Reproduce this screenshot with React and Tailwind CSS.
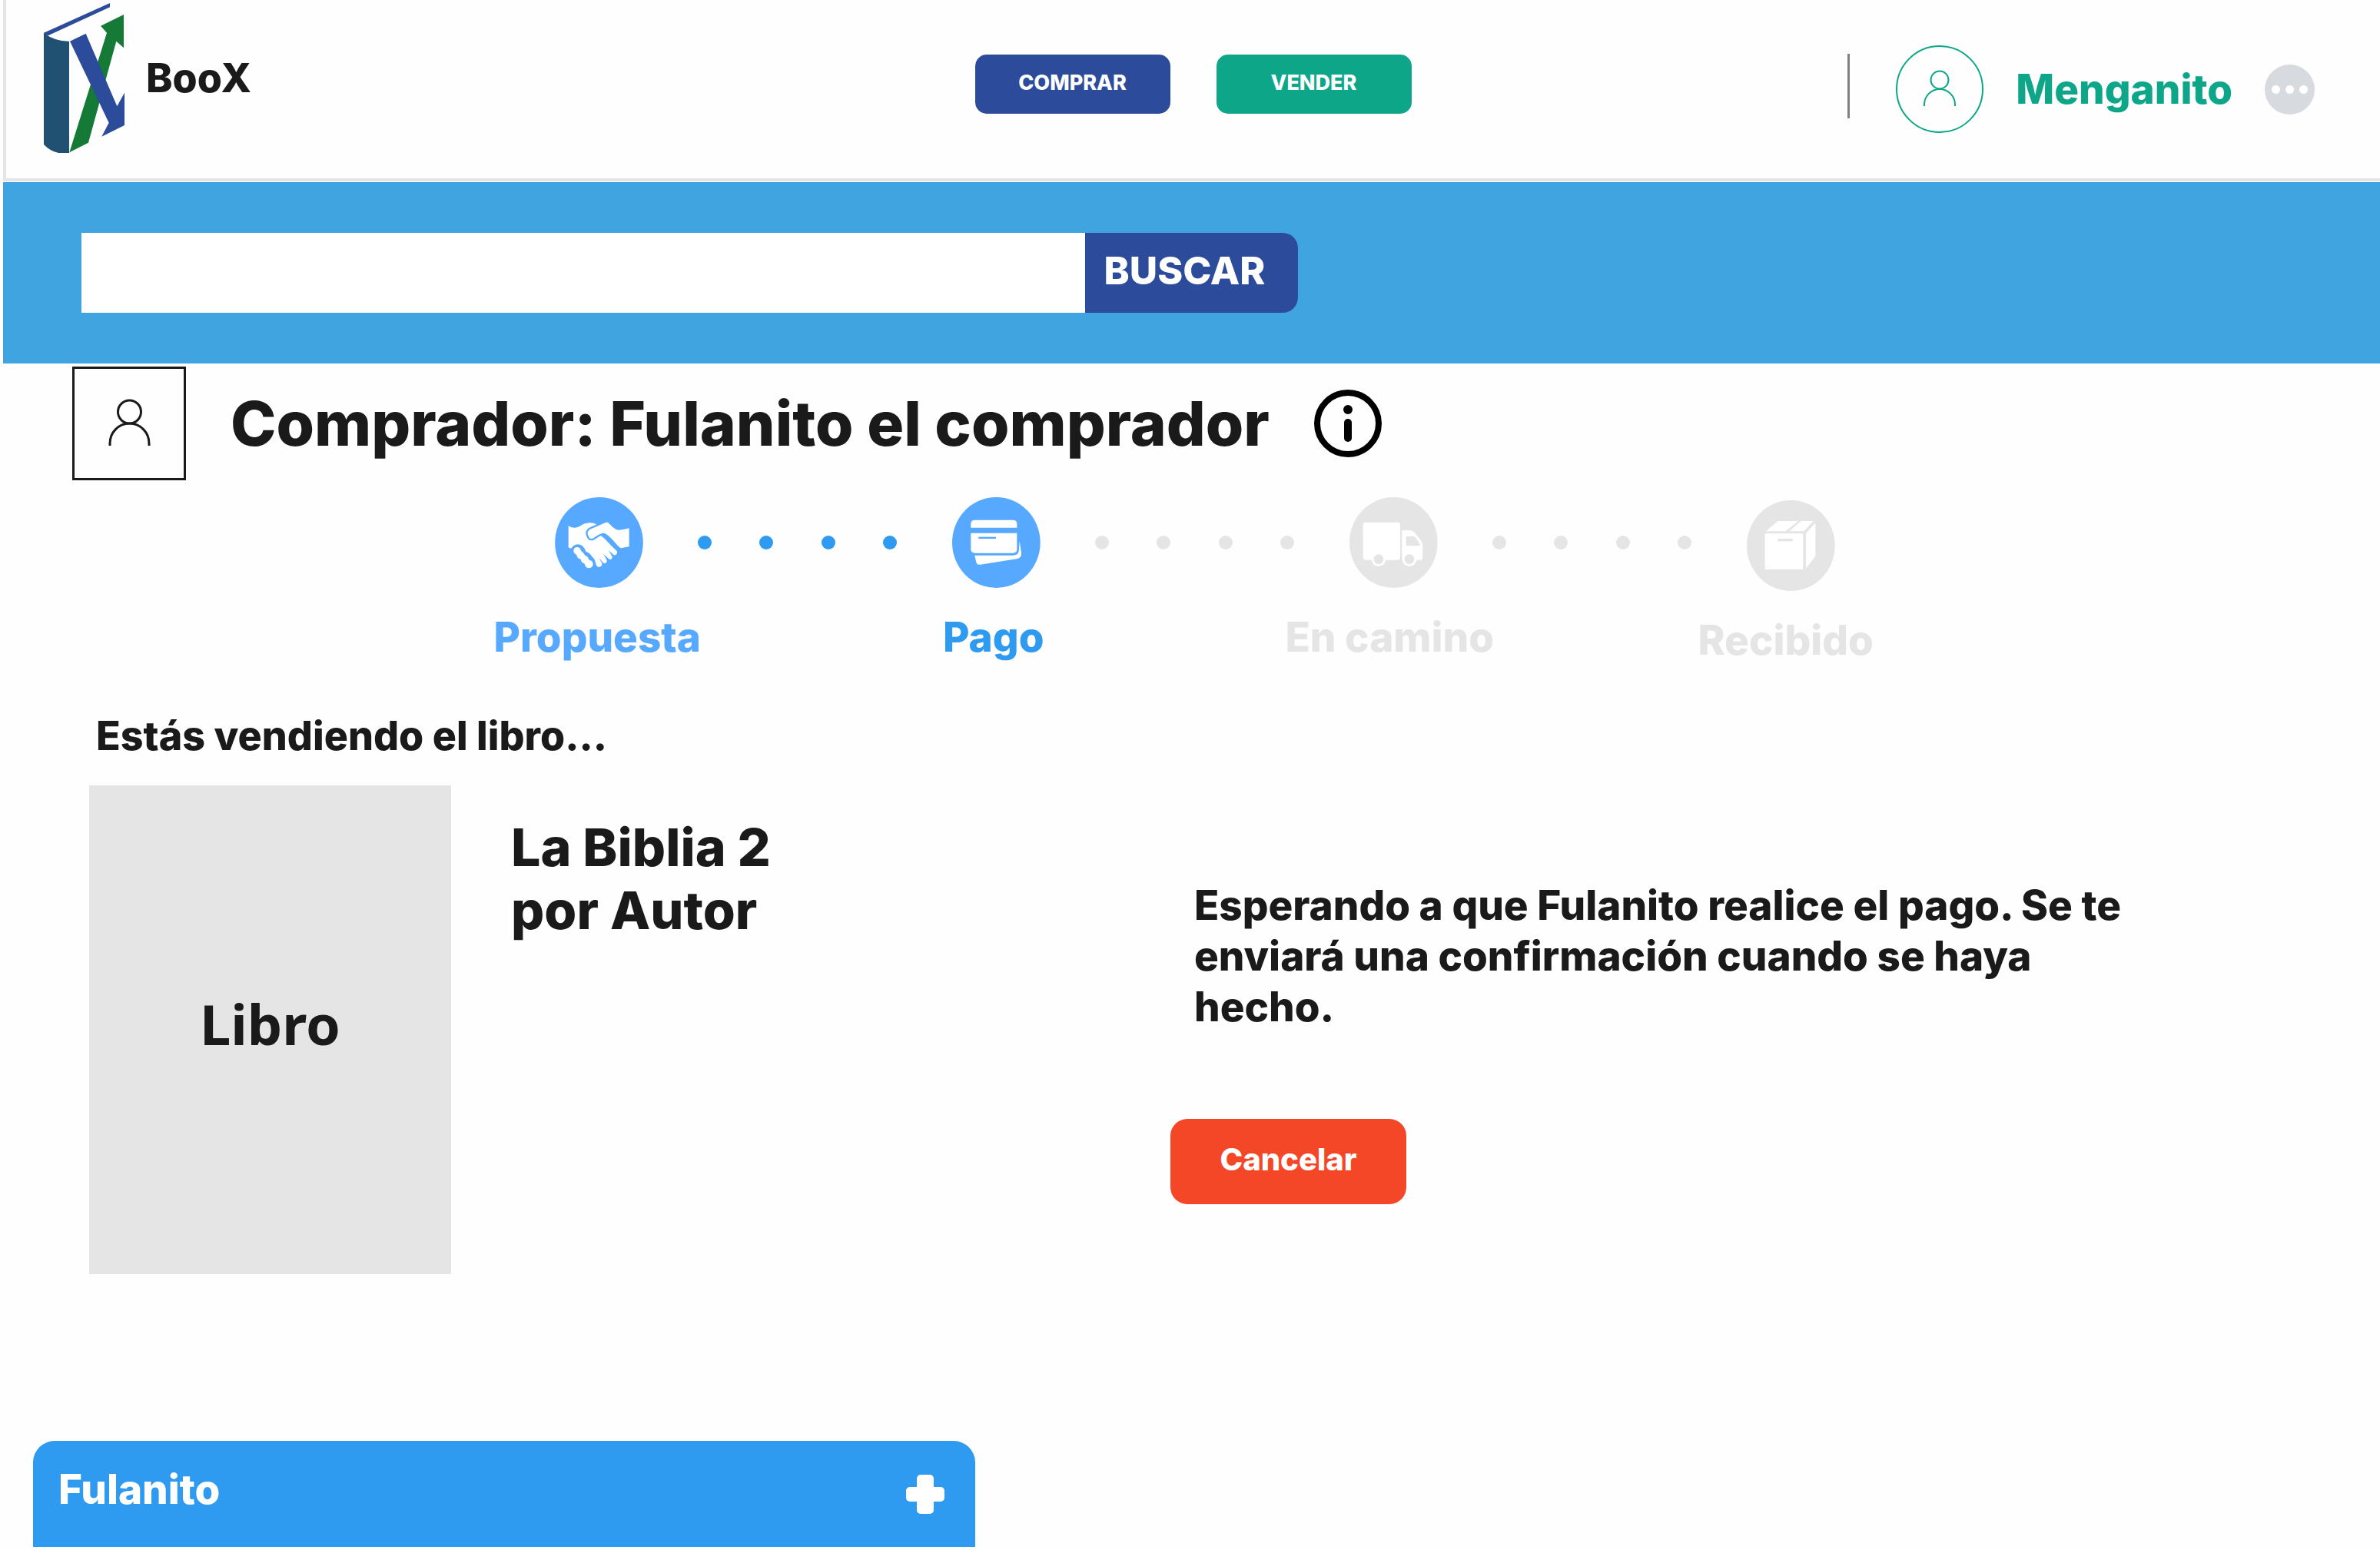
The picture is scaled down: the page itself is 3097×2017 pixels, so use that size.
function Logo() {
  return (
    <svg viewBox="171 12 315 585" className="h-[195px] w-[105px] shrink-0" aria-hidden="true">
      <path d="M171 129 Q215 162 270 161 V597 H228 Q195 590 171 564Z" fill="#205072" />
      <path d="M171 128 L429 12 V28 L188 139 L171 133Z" fill="#2d4b9b" />
      <path d="M393 101 L483 57 V187 L454 161 L345 557 L271 595 L417 128Z" fill="#147a35" />
      <path d="M273 161 L335 131 L457 415 L486 362 V489 L397 533 L425 479Z" fill="#2d4b9b" />
    </svg>
  );
}

function UserCircle() {
  return (
    <svg viewBox="0 0 114 114" className="size-[114px] shrink-0" fill="none" stroke="#0ea688" strokeWidth="2" aria-hidden="true">
      <circle cx="57" cy="57" r="56" />
      <circle cx="57" cy="45" r="11.5" />
      <path d="M37 79 V77 A20 20 0 0 1 77 77 V79" />
    </svg>
  );
}

function UserSquare() {
  return (
    <svg viewBox="0 0 148 148" className="size-[148px] shrink-0" fill="none" stroke="#1a1a1a" strokeWidth="3" aria-hidden="true">
      <rect x="1.5" y="1.5" width="145" height="145" />
      <circle cx="74.5" cy="59" r="15" />
      <path d="M49 103 V100 A25.5 26 0 0 1 100 100 V103" />
    </svg>
  );
}

function InfoIcon() {
  return (
    <svg viewBox="0 0 88 88" className="size-[88px]" aria-hidden="true">
      <circle cx="44" cy="44" r="40" fill="none" stroke="#000" strokeWidth="8" />
      <circle cx="44" cy="26" r="6" />
      <rect x="39" y="38" width="10" height="30" rx="5" />
    </svg>
  );
}

function HandshakeIcon() {
  return (
    <svg viewBox="19 22 345 354" className="h-[118px] w-[115px] shrink-0" aria-hidden="true">
      <ellipse cx="191.5" cy="199" rx="172" ry="177" fill="#57a9ff" />
      <path
        d="M72 134 C90 145 105 143 120 133 C140 121 163 117 181 128 C175 145 190 165 206 178 C214 182 228 202 259 230 C268 240 257 253 247 246 L228 229 L242 252 C247 265 233 269 226 260 L209 243 L221 266 C226 280 211 285 205 275 L191 258 L203 280 C206 295 187 299 181 288 C177 268 171 259 165 255 C160 245 152 238 140 234 C134 212 112 195 90 213 L82 222 L72 218Z"
        fill="#fff"
      />
      <path
        d="M150 173 C142 160 150 149 162 145 L215 122 Q223 118 230 124 C245 140 258 151 270 150 Q290 148 309 143 V215 Q292 218 277 221 C265 217 243 180 219 166 Q211 161 203 163 C190 167 177 177 167 183 Q154 187 150 173Z"
        fill="#fff"
        stroke="#57a9ff"
        strokeWidth="14"
        strokeLinejoin="round"
        paintOrder="stroke"
      />
      <path d="M106 232 L152 283" stroke="#fff" strokeWidth="24" strokeLinecap="round" />
      <g fill="#fff">
        <circle cx="106" cy="231" r="14" />
        <circle cx="119" cy="249" r="14" />
        <circle cx="136" cy="266" r="15" />
        <circle cx="152" cy="283" r="16" />
      </g>
    </svg>
  );
}

function CardIcon() {
  return (
    <svg viewBox="23 22 345 354" className="h-[118px] w-[115px] shrink-0" aria-hidden="true">
      <ellipse cx="195" cy="199" rx="172" ry="177" fill="#57a9ff" />
      <g fill="#fff">
        <path d="M96 141 V127 Q96 111 112 111 H260 Q276 111 276 127 V141Z" />
        <path d="M96 162 H276 V224 Q276 240 260 240 H112 Q96 240 96 224Z" />
        <path d="M111 249 H261 Q284 248 284 226 L286 194 L293 238 Q295 257 279 262 L133 285 Q120 287 117 276Z" />
      </g>
      <rect x="126" y="177" width="68" height="7" fill="#57a9ff" />
    </svg>
  );
}

function TruckIcon() {
  return (
    <svg viewBox="0 0 345 354" className="h-[118px] w-[115px] shrink-0" aria-hidden="true">
      <ellipse cx="172" cy="177" rx="172" ry="177" fill="#e5e5e5" />
      <g fill="#fff">
        <rect x="53" y="98" width="145" height="147" rx="10" />
        <path d="M205 130 H240 Q248 130 254 138 L278 168 Q286 178 286 190 V235 Q286 245 276 245 H205Z" />
        <circle cx="114" cy="242" r="28" />
        <circle cx="234" cy="242" r="28" />
      </g>
      <path d="M225 153 H250 Q256 153 259 158 L275 183 Q277 190 270 190 H225 Q221 190 221 186 V157 Q221 153 225 153Z" fill="#e5e5e5" />
      <circle cx="114" cy="242" r="19" fill="#e5e5e5" />
      <circle cx="234" cy="242" r="19" fill="#e5e5e5" />
    </svg>
  );
}

function BoxIcon() {
  return (
    <svg viewBox="0 0 345 354" className="mt-1 -mb-1 h-[118px] w-[115px] shrink-0" aria-hidden="true">
      <ellipse cx="172" cy="177" rx="172" ry="177" fill="#e5e5e5" />
      <g fill="#fff">
        <path d="M71 130 H220 V270 H71Z" />
        <path d="M75 121 L121 81 H201 L152 121Z" />
        <path d="M166 121 L212 81 H260 L223 121Z" />
        <path d="M231 130 L268 88 V218 L231 266Z" />
      </g>
      <rect x="121" y="150" width="58" height="10" fill="#e5e5e5" />
    </svg>
  );
}

function Dots({ color }) {
  return (
    <div className="flex flex-1 items-center justify-between px-[71px]">
      {[0, 1, 2, 3].map((i) => (
        <span key={i} className={`size-[18px] rounded-full ${color}`} />
      ))}
    </div>
  );
}

export default function App() {
  return (
    <div className="flex min-h-screen flex-col bg-[#fefefe] pl-1 font-['Inter',sans-serif] font-extrabold text-[#1a1a1a]">
      <header className="grid h-[236px] grid-cols-[1fr_auto_1fr] items-start border-b-4 border-l-4 border-[#e5e5e5]">
        <div className="flex items-center gap-7 pt-1 pl-[49px]">
          <Logo />
          <span className="text-[52px] leading-[64px]">BooX</span>
        </div>
        <nav className="flex gap-[60px] pt-[71px]">
          <button type="button" className="h-[77px] w-[254px] rounded-[15px] bg-[#2d4b9b] pb-0.5 text-[27px] text-white">COMPRAR</button>
          <button type="button" className="h-[77px] w-[254px] rounded-[15px] bg-[#0ea688] pb-0.5 text-[27px] text-white">VENDER</button>
        </nav>
        <div className="flex items-center justify-end gap-[42px] pt-[59px] pr-[85px]">
          <span className="mr-[18px] mb-2 h-[84px] w-[3px] bg-[#808080]" />
          <UserCircle />
          <span className="text-[53px] leading-[64px] text-[#0ea688]">Menganito</span>
          <button type="button" aria-label="Más opciones" className="flex size-[65px] items-center justify-center gap-[7px] rounded-full bg-[#d7dadf]">
            <span className="size-[11px] rounded-full bg-white" />
            <span className="size-[11px] rounded-full bg-white" />
            <span className="size-[11px] rounded-full bg-white" />
          </button>
        </div>
      </header>

      <form className="mt-px flex h-[236px] items-center bg-[#3fa4e0] px-[102px]" onSubmit={(e) => e.preventDefault()}>
        <div className="flex h-[104px] w-full max-w-[1583px]">
          <input type="search" aria-label="Buscar libros" className="min-w-0 flex-1 bg-white px-8 text-[40px] outline-none" />
          <button type="submit" className="w-[277px] rounded-r-[20px] bg-[#2d4b9b] pr-[18px] pb-1.5 text-[50px] text-white">BUSCAR</button>
        </div>
      </form>

      <section className="mt-1 flex items-center gap-[58px] pl-[90px]">
        <UserSquare />
        <h1 className="text-[80px] leading-[96px]">Comprador: Fulanito el comprador</h1>
        <button type="button" aria-label="Información"><InfoIcon /></button>
      </section>

      <section className="mx-auto mt-[22px] w-2/3">
        <div className="flex pr-[194px] pl-[202px]">
          <HandshakeIcon />
          <Dots color="bg-[#2e9af0]" />
          <CardIcon />
          <Dots color="bg-[#e5e5e5]" />
          <TruckIcon />
          <Dots color="bg-[#e5e5e5]" />
          <BoxIcon />
        </div>
        <ol className="mt-8 grid grid-cols-4 text-center text-[53px] leading-[64px] text-[#e5e5e5]">
          <li className="text-[#57a9ff]">Propuesta</li>
          <li className="text-[#2e9af0]">Pago</li>
          <li>En camino</li>
          <li className="pt-1">Recibido</li>
        </ol>
      </section>

      <main className="mt-[61px]">
        <h2 className="pl-[121px] text-[52px] leading-[64px]">Estás vendiendo el libro...</h2>
        <div className="mt-8 grid grid-cols-[1519fr_1574fr]">
          <div className="flex items-start gap-[78px] pl-[112px]">
            <div className="flex h-[636px] w-[471px] shrink-0 items-center justify-center bg-[#e5e5e5] pb-4 font-['Noto_Sans',sans-serif] text-[72px] font-bold">Libro</div>
            <p className="pt-[39px] text-[68px] leading-[82px]">La Biblia 2<br />por Autor</p>
          </div>
          <div className="pt-[123px]">
            <p className="max-w-[1270px] pl-[31px] text-[53px] leading-[66px]">Esperando a que Fulanito realice el pago. Se te enviará una confirmación cuando se haya hecho.</p>
            <button type="button" className="mt-[113px] h-[111px] w-[307px] rounded-[22px] bg-[#f34727] pb-1.5 text-[40px] text-white">Cancelar</button>
          </div>
        </div>
      </main>

      <button type="button" className="mt-auto mb-1 ml-[39px] flex h-[138px] w-[1226px] items-center justify-between rounded-t-[28px] bg-[#2e9af0] pr-10 pl-[33px] text-white">
        <span className="pb-3 text-[53px] leading-[64px]">Fulanito</span>
        <svg viewBox="0 0 50 51" className="h-[51px] w-[50px]" fill="currentColor" aria-hidden="true">
          <rect x="14" width="22" height="51" rx="5" />
          <rect y="16" width="50" height="19" rx="5" />
        </svg>
      </button>
    </div>
  );
}
